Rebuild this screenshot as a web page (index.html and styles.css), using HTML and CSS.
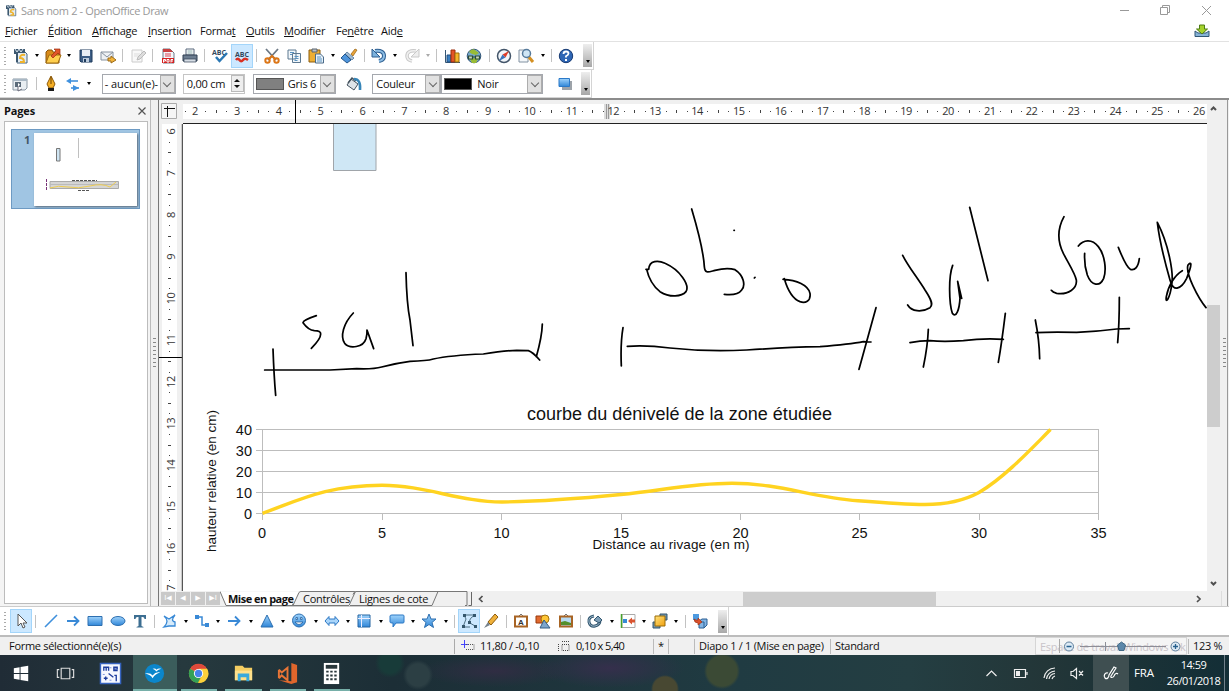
FILE: index.html
```html
<!DOCTYPE html>
<html lang="fr">
<head>
<meta charset="utf-8">
<title>Sans nom 2 - OpenOffice Draw</title>
<link rel="stylesheet" href="styles.css">
</head>
<body>
<svg width="0" height="0" class="defs">
<defs>
<linearGradient id="blue" x1="0" y1="0" x2="0" y2="1"><stop offset="0" stop-color="#9fd3fb"/><stop offset="1" stop-color="#2f86d8"/></linearGradient>
<linearGradient id="gold" x1="0" y1="0" x2="1" y2="1"><stop offset="0" stop-color="#ffe27a"/><stop offset="1" stop-color="#f0a010"/></linearGradient>
<symbol id="doc" viewBox="0 0 20 20"><path d="M7 5h7l3 3v9H7z" fill="#e3edf5" stroke="#49657c"/><path d="M4 3h11v4H8v9H6V8H4z" fill="#3d5870"/><path d="M15 9q-5-1-5 3 4 0 4 4h-4" fill="none" stroke="#efb32c" stroke-width="2"/><path d="M5 3l2 3 2-3 2 3 2-3" fill="none" stroke="#d8e4ee"/></symbol>
</defs>
</svg>

<header class="titlebar">
  <svg class="app-icon" width="15" height="15"><use href="#doc"/></svg>
  <span class="title">Sans nom 2 - OpenOffice Draw</span>
  <svg class="winbtns" width="100" height="20" viewBox="1118 0 100 20" fill="none" stroke="#999"><path d="M1120 9.5h9M1202 5l9 9M1211 5l-9 9M1160.500 6.500h7v7h-7zM1162.500 6v-1.500h7v7h-1.500"/></svg>
</header>

<nav class="menubar">
  <span><u>F</u>ichier</span><span><u>É</u>dition</span><span><u>A</u>ffichage</span><span><u>I</u>nsertion</span><span>Forma<u>t</u></span><span><u>O</u>utils</span><span><u>M</u>odifier</span><span>Fe<u>n</u>être</span><span>Aid<u>e</u></span>
  <svg class="update" width="16" height="14" viewBox="0 0 16 14"><path d="M1 7v5.500h14V7l-3 2H4z" fill="#86b3d6" stroke="#315776"/><path d="M5.500 1h5v4h3L8 10 2.500 5h3z" fill="#a5d22c" stroke="#4e7d13"/></svg>
</nav>

<div class="toolbar standard">
  <i class="grip"></i>
  <b class="cell"><svg><use href="#doc"/></svg></b><i class="arr"></i>
  <b class="cell"><svg viewBox="0 0 20 20"><path d="M3 6l2-2h4l1 2h6v11H3z" fill="#d88a1a" stroke="#8a560a"/><path d="M3 17l3-8h12l-3 8z" fill="#ffcf4e" stroke="#a06c10"/><path d="M8 10l5-5-2-2h6v6l-2-2-5 5z" fill="#e2562a" stroke="#9c2d10" stroke-width=".7"/></svg></b><i class="arr"></i>
  <b class="cell"><svg viewBox="0 0 20 20"><path d="M4 4h12v12H5l-1-1z" fill="#3d5e86" stroke="#1f3b5c"/><path d="M6 4h8v6H6z" fill="#e8eef5"/><path d="M7 12h6v4H7z" fill="#bccbdc"/><path d="M8 13h2v3H8z" fill="#1f3b5c"/></svg></b>
  <b class="cell"><svg viewBox="0 0 20 20"><path d="M3 6h12v8H3z" fill="#eef1f4" stroke="#8793a0"/><path d="M3 6l6 5 6-5" fill="none" stroke="#8793a0"/><path d="M10 12h3v-2l5 4-5 3v-2h-3z" fill="#f3b43b" stroke="#9c6b18"/></svg></b>
  <i class="sep"></i>
  <b class="cell"><svg viewBox="0 0 20 20"><path d="M4 4h10v12H4z" fill="#f8f8f8" stroke="#ccc"/><path d="M6 8h6M6 10h5" stroke="#ddd"/><path d="M9 14l1-3 6-6 2 2-6 6z" fill="#ddd" stroke="#bbb"/></svg></b>
  <i class="sep"></i>
  <b class="cell"><svg viewBox="0 0 20 20"><path d="M5 3h7l4 4v10H5z" fill="#f4f6f9" stroke="#6d7a88"/><path d="M5 3h7l3 3H5z" fill="#c93f3f"/><path d="M7 8h6M7 10h6" stroke="#d45"/><path d="M4 12h12v5H4z" fill="#d42020"/><path d="M5.500 16.500v-3h2v1.500H6M9 13.500v2.500h2v-2.500zM13 16.500v-3h2M13 15h2" fill="none" stroke="#fff"/></svg></b>
  <b class="cell"><svg viewBox="0 0 20 20"><path d="M6 3h8v6H6z" fill="#fff" stroke="#56677a"/><path d="M7.500 5h5M7.500 7h5" stroke="#8aa"/><path d="M3 9h14v6H3z" fill="#6c7d90" stroke="#2f3e50"/><path d="M4 13h12v3H4z" fill="#d6dde5" stroke="#2f3e50" stroke-width=".7"/></svg></b>
  <i class="sep"></i>
  <b class="cell"><svg viewBox="0 0 20 20"><text x="2" y="8.500" class="abc">ABC</text><path d="M6 11l3.500 4L17 7" fill="none" stroke="#2b78b4" stroke-width="2.500"/></svg></b>
  <b class="cell on"><svg viewBox="0 0 20 20"><text x="3" y="10.500" class="abc">ABC</text><path d="M4 14q1.800-2.500 3.500 0t3.500 0 5 0" fill="none" stroke="#d92f22" stroke-width="2.500"/></svg></b>
  <i class="sep"></i>
  <b class="cell"><svg viewBox="0 0 20 20"><path d="M4 3l10 11M16 3L6 14" stroke="#6b7784" stroke-width="1.800"/><circle cx="5.500" cy="14.500" r="2.200" fill="none" stroke="#dc7617" stroke-width="2"/><circle cx="14.500" cy="14.500" r="2.200" fill="none" stroke="#dc7617" stroke-width="2"/><path d="M7 13l3-3 3 3" fill="none" stroke="#dc7617" stroke-width="2"/></svg></b>
  <b class="cell"><svg viewBox="0 0 20 20"><path d="M4 4h8v9H4zM8.500 7.500h8v9h-8z" fill="#f1f6fa" stroke="#5d7890"/><path d="M6 6.500h4M6 8.500h2M10.500 10.500h4M10.500 12.500h4M10.500 14.500h3" stroke="#5b93c0"/></svg></b>
  <b class="cell"><svg viewBox="0 0 20 20"><path d="M3 4h11v12H3z" fill="#edae33" stroke="#8c5c0e"/><path d="M6 3h5v3H6z" fill="#b9c2ca" stroke="#59636d"/><path d="M9.500 8h5l3 3v6h-8z" fill="#e7f1f9" stroke="#4a6a88"/><path d="M11 11h4M11 13h5M11 15h5" stroke="#5b93c0"/></svg></b><i class="arr"></i>
  <b class="cell"><svg viewBox="0 0 20 20"><path d="M12 8l4-5 2 1-4 6z" fill="#e8a33b" stroke="#94600f" stroke-width=".7"/><path d="M8 6l7 6-2 2-7-6z" fill="#a2bdd6" stroke="#40658a" stroke-width=".7"/><path d="M6 8l6 6-4 3-6-5z" fill="#4d94dc" stroke="#23568b"/></svg></b>
  <i class="sep"></i>
  <b class="cell"><svg viewBox="0 0 20 20"><path d="M6 5q9-1 9 5 0 4-5 5" fill="none" stroke="#2c5d8f" stroke-width="4"/><path d="M3 3v8h8z" fill="#7db2dd" stroke="#2c5d8f"/><path d="M6 5q9-1 9 5 0 4-5 5" fill="none" stroke="#8dbde4" stroke-width="2"/></svg></b><i class="arr"></i>
  <b class="cell"><svg viewBox="0 0 20 20"><path d="M14 5Q5 4 5 10q0 4 5 5" fill="none" stroke="#c9c9c9" stroke-width="3.500"/><path d="M17 3v8H9z" fill="#eee" stroke="#c9c9c9"/><path d="M14 5Q5 4 5 10q0 4 5 5" fill="none" stroke="#f0f0f0" stroke-width="1.500"/></svg></b><i class="arr dim"></i>
  <i class="sep"></i>
  <b class="cell"><svg viewBox="0 0 20 20"><path d="M3.500 4v12.500H18" fill="none" stroke="#365673"/><path d="M5 9h4v7H5z" fill="#3b7fc0" stroke="#1f4f80"/><path d="M9 4h4v12H9z" fill="#e35427" stroke="#9b2c0c"/><path d="M13 7h4v9h-4z" fill="#f6b62b" stroke="#9b6d0c"/></svg></b>
  <b class="cell"><svg viewBox="0 0 20 20"><circle cx="10" cy="10" r="6.800" fill="#76a9cf" stroke="#31557a"/><path d="M5 6q3-4 6-2l4 3-3 2-4-1zM6 13l4-1 4 1-2 4H8z" fill="#99bb35"/><path d="M4.500 10h4v3h-4zM11.500 10h4v3h-4zM8 11h4" fill="#cbd8bb" stroke="#2c4b35" stroke-width="1.200"/></svg></b>
  <i class="sep"></i>
  <b class="cell"><svg viewBox="0 0 20 20"><circle cx="10" cy="10" r="6.500" fill="#f2f6fa" stroke="#44566a" stroke-width="1.500"/><path d="M15 5l-3.500 6.500-3-3z" fill="#df3c28"/><path d="M5 15l3.500-6.500 3 3z" fill="#3b73ba"/></svg></b>
  <b class="cell"><svg viewBox="0 0 20 20"><path d="M3 4h9v12H3z" fill="#f4f7fa" stroke="#8292a2"/><path d="M12 10l5 6" stroke="#d49023" stroke-width="3"/><circle cx="10.500" cy="7.500" r="4" fill="#cfe5f4" stroke="#567a9b" stroke-width="1.500"/></svg></b><i class="arr"></i>
  <i class="sep"></i>
  <b class="cell"><svg viewBox="0 0 20 20"><circle cx="10" cy="10" r="6.700" fill="#2f66b5" stroke="#173a72"/><path d="M7.500 8q0-2.500 2.500-2.500t2.500 2q0 1.300-2.500 2.800v1.200" fill="none" stroke="#fff" stroke-width="1.800"/><path d="M9 13h2v2H9z" fill="#fff"/></svg></b>
  <i class="more"></i>
</div>

<div class="toolbar format">
  <i class="grip"></i>
  <b class="cell"><svg viewBox="0 0 20 20"><path d="M3 5h14v9l-2 2H3z" fill="#e9eef2" stroke="#8b98a4"/><path d="M3 5h14v2H3z" fill="#a9b8c5"/><path d="M5 8h6v5H5z" fill="#5a6a79"/><path d="M8 9l2 1.500L8 13z" fill="#fff"/><path d="M8 12v5l4-2" fill="#fff" stroke="#667"/></svg></b>
  <i class="sep s1"></i>
  <b class="cell"><svg viewBox="0 0 20 20"><path d="M10 2l4 8-2 4H8l-2-4z" fill="#f4ae25" stroke="#8c5908"/><path d="M10 3v7" stroke="#6d4305"/><path d="M7 14h6v3H7z" fill="#1b1b1b"/></svg></b>
  <b class="cell"><svg viewBox="0 0 20 20"><path d="M6 7h9M8 14h8" stroke="#3689d8" stroke-width="1.500"/><path d="M8 4v6L3 7z" fill="#3f91df"/><path d="M10 11l6 3-6 3z" fill="#3f91df"/></svg></b><i class="arr a1"></i>
  <div class="combo style"><span>- aucun(e)-</span><i class="drop"></i></div>
  <div class="combo width"><span>0,00 cm</span><i class="spin"></i></div>
  <div class="combo color"><i class="swatch gray"></i><span>Gris 6</span><i class="drop"></i></div>
  <b class="cell bucket"><svg viewBox="0 0 20 20"><path d="M7 5l7 5-4 6-7-5z" fill="#dde3e8" stroke="#44525e"/><path d="M4 9l4-5 4 3" fill="none" stroke="#44525e" stroke-width="1.500"/><path d="M10 5q7 0 6 11" fill="none" stroke="#3685b8" stroke-width="2.600"/></svg></b>
  <div class="combo fill"><span>Couleur</span><i class="drop"></i></div>
  <div class="combo black-box"><i class="swatch black"></i><span>Noir</span><i class="drop"></i></div>
  <b class="cell shadow"><svg viewBox="0 0 20 20"><path d="M7 7h10v9H7z" fill="#9da3a9"/><path d="M4 4.500h10.500v8H4z" fill="url(#blue)" stroke="#2a79c8"/></svg></b>
  <i class="more"></i>
</div>

<main class="workspace">
  <aside class="pages">
    <div class="pages-head"><strong>Pages</strong><svg width="8" height="8" viewBox="0 0 8 8"><path d="M.5.500l7 7M7.500.500l-7 7" stroke="#555" stroke-width="1.200"/></svg></div>
    <div class="pages-list">
      <div class="slide">
        <span>1</span>
        <svg class="thumb" width="103" height="73" viewBox="34 132 103 73"><path d="M56.500 147.500h3.500v12.500h-3.500z" fill="#cfe5f3" stroke="#777"/><path d="M78.500 137v20" stroke="#c0c0c0"/><path d="M50 180.500h68.500v7H50z" fill="#d5d5d5" stroke="#aaa"/><path d="M50 183.500h68" stroke="#bbb"/><path d="M50 187q8-3 18-1t22-1 20 1l6-5" fill="none" stroke="#edcc52"/><path d="M72 179.500h25M78 189.500h12" stroke="#555" stroke-dasharray="3 1"/><path d="M46.500 178v12" stroke="#737" stroke-dasharray="3 1"/></svg>
      </div>
    </div>
  </aside>
  <div class="splitter"><i></i></div>
  <section class="editor">
    <div class="corner"><svg width="16" height="16" viewBox="0 0 16 16"><path d="M.5.500h15v15H.5z" fill="#f5f5f5" stroke="#aaa"/><path d="M3 5.500h11M6.500 3v11" stroke="#111"/></svg></div>
    <svg id="hruler" class="hruler" width="1024" height="24" viewBox="183 100 1024 24"></svg>
    <svg id="vruler" class="vruler" width="24" height="467" viewBox="159 124 24 467"></svg>
    <svg class="canvas" width="1024" height="467" viewBox="183 124 1024 467">
      <path d="M333.500 120h42.500v50.500h-42.500z" fill="#cfe7f5" stroke="#a0a5aa"/>
      <g class="grid"><path d="M256 429.500h843M256 450.500h843M256 471.500h843M256 492.500h843M256 513.500h843"/><path d="M262.500 429v91M382.500 514v6M501.500 514v6M621.500 514v6M740.500 514v6M859.500 514v6M979.500 514v6M1098.500 429v91"/></g>
      <path class="curve" d="M262.500 513.300C300 500 325 485.500 382 485.300 425 485.300 460 502 502 502 545 501.500 580 498.500 621 494.500 660 491 690 483.300 732 483.300 780 483.300 810 497 858 500.800 885 503 905 504.500 925 504.500 950 504.500 967 499 979 492.500 1005 477 1030 450 1050.500 429.500"/>
      <g class="chart">
        <text x="527" y="420" class="ctitle" textLength="305">courbe du dénivelé de la zone étudiée</text>
        <g text-anchor="end"><text x="252" y="435">40</text><text x="252" y="456">30</text><text x="252" y="477">20</text><text x="252" y="498">10</text><text x="252" y="518.500">0</text></g>
        <g text-anchor="middle"><text x="262" y="538">0</text><text x="382" y="538">5</text><text x="501.500" y="538">10</text><text x="621" y="538">15</text><text x="740.500" y="538">20</text><text x="859.500" y="538">25</text><text x="979" y="538">30</text><text x="1098.500" y="538">35</text></g>
        <text x="592.500" y="549" class="axis" textLength="157">Distance au rivage (en m)</text>
        <text transform="translate(216 552) rotate(-90)" class="axis" textLength="142">hauteur relative (en cm)</text>
      </g>
      <g class="ink" transform="translate(150 260) scale(.33333)">
        <path d="M344 330L540 330 620 326Q670 328 695 321 740 309 780 304 830 303 850 297 900 286 1000 282 1060 272 1100 271L1135 272Q1148 276 1169 300M1177 192Q1176 230 1159 290M369 267Q372 350 377 406"/>
        <path d="M499 167Q460 180 459 188 475 210 493 212 513 212 512 222 512 237 484 265M610 159C580 190 570 230 584 250 600 268 640 262 648 236Q652 220 651 210L671 266M768 38Q770 130 780 180L789 257"/>
      </g>
      <g class="ink" transform="translate(600 190) scale(.33333)">
        <path d="M138 238L146 238C148 210 175 210 195 220 240 240 270 285 258 305 245 320 210 324 180 305 155 285 145 260 140 238M275 57Q310 175 313 230C315 252 325 246 345 241 380 232 395 236 405 239 430 255 438 285 425 300 415 314 390 315 373 313M402 121h1M463 264l2-2M549 268C590 270 625 285 630 310 633 335 615 340 600 335 575 325 560 290 553 266"/>
        <path d="M69 413Q61 460 64 528M82 469Q140 465 210 474 320 486 440 480 560 472 660 470 750 463 790 455L813 456M828 353L777 538"/>
      </g>
      <g class="ink" transform="translate(890 190) scale(.33333)">
        <path d="M38 196C55 230 80 260 105 300 125 330 130 345 120 353 95 368 65 365 53 345M188 226C175 260 177 340 187 370 198 385 208 360 210 325L203 274 215 325M239 52L294 272M60 458Q90 452 120 452 160 456 220 452 280 444 340 448M115 418Q113 470 100 531M346 370Q335 460 325 517"/>
        <path d="M522 80C500 120 505 160 520 190 535 220 555 250 559 270 562 295 535 315 500 310Q488 307 484 301M565 168C580 150 605 145 625 170 645 195 650 240 641 265 630 290 605 290 592 255Q582 225 584 190M685 172Q708 230 721 238C735 243 745 230 748 206M436 390Q448 450 449 506M438 428Q480 425 560 427 620 425 680 417L718 416M688 322Q688 400 683 458"/>
        <path d="M802 97C835 160 852 250 845 285 840 325 825 345 829 320 835 285 855 255 877 242M802 97C808 150 820 200 840 270 850 310 875 295 890 265 910 215 902 215 894 225 885 250 925 325 948 353"/>
      </g>
    </svg>
    <div class="vscroll"><i class="vthumb"></i><svg width="13" height="492" viewBox="0 0 13 492" fill="none" stroke="#505050" stroke-width="2"><path d="M4 10l2.500-2.500L9 10M4 482l2.500 2.500L9 482"/></svg></div>
    <div class="bottombar">
      <div class="navbtns"><i>I◀</i><i>◀</i><i>▶</i><i>▶I</i></div>
      <div class="tabs">
        <svg width="252" height="15" viewBox="220 591 252 15"><path d="M220.500 591.500l6 14h66l6-14z" fill="#fff"/><path d="M220 591.500l6 14h67l6-13q1-1 2-1h53q2 0 1 1l-6 13h-56q-1 0 0-2M350 605.500h82l6-14h-82q-2 0-3 3M436 591.500h31v14h-2" fill="none" stroke="#777"/><path d="M471.500 592v13.500h-3" fill="none" stroke="#666"/></svg>
        <b>Mise en page</b><span>Contrôles</span><span>Lignes de cote</span>
      </div>
      <div class="hscroll"><svg width="736" height="15" viewBox="472 591 736 15"><path d="M743 592h193v14H743z" fill="#cdcdcd"/><path d="M482.500 596l-3 3 3 3M1197 596l3 3-3 3" fill="none" stroke="#505050" stroke-width="1.700"/></svg></div>
    </div>
  </section>
  <div class="sidebar-strip"><i></i></div>
</main>

<div class="toolbar draw">
  <i class="grip"></i>
  <b class="cell on"><svg viewBox="0 0 20 20"><path d="M7 3v12l3-3 2 5 2-1-2-4h4z" fill="#fff" stroke="#555"/></svg></b>
  <i class="sep"></i>
  <b class="cell"><svg viewBox="0 0 20 20"><path d="M4 16L16 4" stroke="#3f90dc" stroke-width="1.600"/></svg></b>
  <b class="cell"><svg viewBox="0 0 20 20"><path d="M4 10h12M11 5.500l4.500 4.500-4.500 4.500" fill="none" stroke="#3989d6" stroke-width="1.800"/></svg></b>
  <b class="cell"><svg viewBox="0 0 20 20"><path d="M3 5.500h14v9H3z" fill="url(#blue)" stroke="#2d6fb0"/></svg></b>
  <b class="cell"><svg viewBox="0 0 20 20"><ellipse cx="10" cy="10" rx="7" ry="4.500" fill="url(#blue)" stroke="#2d6fb0"/></svg></b>
  <b class="cell"><svg viewBox="0 0 20 20"><path d="M4 4h12v4h-1.500q0-2-2-2H11.500v9l2 1v.5h-7V16l2-1V6H7.500q-2 0-2 2H4z" fill="#3c6e91"/></svg></b>
  <i class="sep"></i>
  <b class="cell"><svg viewBox="0 0 20 20"><path d="M4 5l5 3 6-4q-5 6 0 7v4h-6l-5 1q6-6 0-11z" fill="#d7ebfa" stroke="#3989d6" stroke-width="1.300"/></svg></b><i class="arr"></i>
  <b class="cell"><svg viewBox="0 0 20 20"><path d="M5 6h5v8h5" fill="none" stroke="#3989d6" stroke-width="1.500"/><path d="M3 4h4v4H3zM13 12h4v4h-4z" fill="#3989d6"/></svg></b><i class="arr"></i>
  <b class="cell"><svg viewBox="0 0 20 20"><path d="M4 10h12M11 5.500l4.500 4.500-4.500 4.500" fill="none" stroke="#3989d6" stroke-width="1.800"/></svg></b><i class="arr"></i>
  <b class="cell"><svg viewBox="0 0 20 20"><path d="M10 4l6 12H4z" fill="url(#blue)" stroke="#2d6fb0"/></svg></b><i class="arr"></i>
  <b class="cell"><svg viewBox="0 0 20 20"><circle cx="10" cy="9.500" r="6.500" fill="url(#blue)" stroke="#2d6fb0"/><path d="M6 11q4 5 8 0zM7 6.500h1.500v2H7zM11.500 6.500H13v2h-1.500z" fill="#fff" stroke="#235f9e" stroke-width=".8"/></svg></b><i class="arr"></i>
  <b class="cell"><svg viewBox="0 0 20 20"><path d="M3 10l4-4.500V8h6V5.500l4 4.500-4 4.500V12H7v2.500z" fill="#a9d5fa" stroke="#2d78c4"/></svg></b><i class="arr"></i>
  <b class="cell"><svg viewBox="0 0 20 20"><path d="M4 4h12v12H4z" fill="url(#blue)" stroke="#2564a2"/><path d="M7.500 4v12M4 7.500h12" stroke="#eef"/></svg></b><i class="arr"></i>
  <b class="cell"><svg viewBox="0 0 20 20"><path d="M5 4h11q1 0 1 1v6q0 1-1 1H9l-3 4v-4H5q-2 0-2-1V5q0-1 2-1z" fill="url(#blue)" stroke="#2d78c4"/></svg></b><i class="arr"></i>
  <b class="cell"><svg viewBox="0 0 20 20"><path d="M10 3l2 5h5l-4 3.500 1.500 5L10 13.500l-4.500 3 1.500-5L3 8h5z" fill="url(#blue)" stroke="#2d6fb0"/></svg></b><i class="arr"></i>
  <i class="sep"></i>
  <b class="cell on"><svg viewBox="0 0 20 20"><path d="M5 4h11Q9 8 11 12l5 3M5 4l2 4-3 8h7" fill="none" stroke="#4e7084"/><path d="M4 3h3v3H4zM14 3h3v3h-3zM3 14h3v3H3zM9 10h3v3H9zM15 14h3v3h-3z" fill="#34566c"/></svg></b>
  <b class="cell"><svg viewBox="0 0 20 20"><path d="M7 11l7-8 3 3-7 8z" fill="#f0b13a" stroke="#8f5c0c"/><path d="M7 11l-4 6 6-3z" fill="#77838c"/></svg></b>
  <i class="sep"></i>
  <b class="cell"><svg viewBox="0 0 20 20"><path d="M8 5l2-2 2 2" fill="none" stroke="#777"/><path d="M4 5.500h12v10H4z" fill="#fff" stroke="#a86424" stroke-width="2"/><text x="7" y="14" class="letter">A</text></svg></b>
  <b class="cell"><svg viewBox="0 0 20 20"><path d="M3 5h8v7H3z" fill="#e16a2f" stroke="#98390d"/><circle cx="12" cy="8" r="4" fill="#ffc636" stroke="#a0720e"/><path d="M11 9l6 8H7z" fill="#7da5cb" stroke="#365c82"/></svg></b>
  <b class="cell"><svg viewBox="0 0 20 20"><path d="M8 5l2-2 2 2" fill="none" stroke="#777"/><path d="M4 5.500h12v10H4z" fill="#b7daf2" stroke="#a86424" stroke-width="2"/><path d="M5 14v-3l4-1 6 2v2z" fill="#548f2c"/></svg></b>
  <i class="sep"></i>
  <b class="cell"><svg viewBox="0 0 20 20"><path d="M9 5Q3 6 4 11t6 4 5-6" fill="none" stroke="#32566f" stroke-width="3"/><path d="M9 5Q3 6 4 11t6 4 5-6" fill="none" stroke="#9db8ca"/><path d="M9 9l4-4 4 4-3 3z" fill="#7c9db5" stroke="#32566f"/></svg></b><i class="arr"></i>
  <b class="cell"><svg viewBox="0 0 20 20"><path d="M4 3.500h13v13H4z" fill="#fff" stroke="#aaa"/><path d="M3.500 3v14" stroke="#46a32a" stroke-width="1.500"/><path d="M5 8h4v4H5z" fill="#3689d6"/><path d="M10 10l4-3.500v2h3v3h-3v2z" fill="#d95431"/></svg></b><i class="arr"></i>
  <b class="cell"><svg viewBox="0 0 20 20"><path d="M10 3h7v6h-7zM3 11h7v6H3z" fill="#6f93ac" stroke="#34566f"/><path d="M5 5h10v10H5z" fill="url(#gold)" stroke="#9b6c09"/></svg></b><i class="arr"></i>
  <i class="sep"></i>
  <b class="cell"><svg viewBox="0 0 20 20"><path d="M3 3h6v6H3z" fill="#4d9ae0"/><path d="M9 10l3-2h5v6l-3 3H9z" fill="#83b4e3" stroke="#2b5f94"/><path d="M9 11h5v6" fill="none" stroke="#2b5f94"/><path d="M4 8q0 4 4 4v2l4-3-4-4v2H6z" fill="#dc512b" stroke="#962b0d" stroke-width=".6"/></svg></b>
  <i class="more"></i>
</div>

<footer class="status">
  <span class="s-info">Forme sélectionné(e)(s)</span>
  <div class="s-pos"><svg width="14" height="12" viewBox="0 0 14 12" fill="none"><path d="M0 4.500h7M3.500 0v8" stroke="#44f"/><path d="M5 4.500h8v5H4" stroke="#555" stroke-dasharray="1 1"/></svg><span>11,80 / -0,10</span></div>
  <div class="s-size"><svg width="14" height="12" viewBox="0 0 14 12" fill="none" stroke="#444" stroke-dasharray="1 1"><path d="M5 4.500h7v6H5zM1.500 4v7M5 1.500h7"/></svg><span>0,10 x 5,40</span></div>
  <span class="s-star">*</span>
  <span class="s-blank"></span>
  <span class="s-slide">Diapo 1 / 1 (Mise en page)</span>
  <span class="s-layout">Standard</span>
  <div class="s-tip"><span>Espace de travail Windows Ink</span>
    <svg width="152" height="18" viewBox="1035 637 152 18"><path d="M1059.500 639v14" stroke="#aaa"/><path d="M1080 646.500h86M1105.500 642v9" stroke="#8d8d96"/><g fill="#dceaf5" stroke="#5f7f9c"><circle cx="1069" cy="646.500" r="4.500"/><circle cx="1175.500" cy="646.500" r="4.500"/></g><path d="M1066.500 646.500h5M1173 646.500h5M1175.500 644v5" stroke="#27618f" stroke-width="1.300"/><path d="M1121.500 642l4 3-1.500 5.500h-5l-1.500-5.500z" fill="#5b87aa" stroke="#426985"/></svg>
  </div>
  <span class="s-zoom">123 %</span>
</footer>

<div class="taskbar">
  <div class="task"><svg viewBox="0 0 24 24" fill="#fff"><path d="M4 6.500l6-1v6H4zM11 5.300l8-1.300v7.500h-8zM4 12.500h6v6l-6-1zM11 12.500h8V20l-8-1.300z"/></svg></div>
  <div class="task"><svg viewBox="0 0 24 24" fill="none" stroke="#ddd" stroke-width="1.200"><path d="M7.500 6.500h9v11h-9zM5.500 8H3.500v8h2M18.500 8h2v8h-2"/></svg></div>
  <div class="task"><svg viewBox="0 0 24 24"><path d="M1.500 1.500h21v21h-21z" fill="#f6f8ff" stroke="#3764c0" stroke-width="1.500"/><path d="M5 9V5.500h5V9M7.500 6v3M19.500 9h-4V5.500h3.500v2h-3M5 17h4M7 15v4M10 12l5 4M16 14h2v6" fill="none" stroke="#1d3d9e" stroke-width="1.400"/><path d="M11 6h2M4 13h2M11 19h2" stroke="#7b94dd"/></svg></div>
  <div class="task open active"><svg viewBox="0 0 24 24"><circle cx="12" cy="12" r="10" fill="#0b86cb"/><path d="M2 12q6-1 8 2 3-4 8-3-5 1-8 6-2-4-8-5zM10 7q3-1 4 1 2-2 5-1-4 1-5 3-1-2-4-3z" fill="#fff"/></svg></div>
  <div class="task open"><svg viewBox="0 0 24 24"><circle cx="12" cy="12" r="10" fill="#e3b52d"/><path d="M12 12L3.300 7A10 10 0 0 1 20.700 7z" fill="#df493b"/><path d="M12 12L3.300 7a10 10 0 0 0 8 15l4-8z" fill="#33a156"/><path d="M12 7h9A10 10 0 0 1 12 22l4-8z" fill="#fbd03b"/><circle cx="12" cy="12" r="4.800" fill="#fff"/><circle cx="12" cy="12" r="3.800" fill="#4683e9"/></svg></div>
  <div class="task open"><svg viewBox="0 0 24 24"><path d="M3 4h8l2 2h8v13H3z" fill="#f4cd62"/><path d="M3 9h18v10H3z" fill="#ffe08a"/><path d="M6 20v-8h12v8h-3v-4H9v4z" fill="#39a9dc"/></svg></div>
  <div class="task open"><svg viewBox="0 0 24 24"><path d="M16 1l6 2v18l-6 2-13-4 13 1z" fill="#e0662c"/><path d="M3 8l3 3 6-5v13l-6-5-3 3M3 8v9" fill="none" stroke="#e87536" stroke-width="2"/></svg></div>
  <div class="task open"><svg viewBox="0 0 24 24"><path d="M4 1h16v22H4z" fill="#fff"/><path d="M6 3h12v4H6z" fill="#29373b"/><path d="M6.500 10h11M6.500 14h11M6.500 18h11" stroke="#29373b" stroke-width="2" stroke-dasharray="2.500 1.700"/></svg></div>
  <svg class="tray" width="110" height="36" viewBox="984 655 110 36" fill="none" stroke="#eee" stroke-width="1.200"><path d="M987.500 676l5-5 5 5M1015.500 669.500h11v8h-11zM1028 672v3"/><path d="M1017 671h4v5h-4z" fill="#eee" stroke="none"/><path d="M1045 678a11 11 0 0 1 11-10M1047.500 679a9 9 0 0 1 8.500-8M1050 679a7 7 0 0 1 6-5.500M1053 679a4 4 0 0 1 3-3"/><path d="M1072 671.500h2l3.500-3v10l-3.500-3h-2zM1080 671l4 4.500M1084 671l-4 4.500"/></svg>
  <div class="pen"><svg width="18" height="18" viewBox="0 0 18 18" fill="none" stroke="#fff" stroke-width="1.200"><path d="M6 9c-3-1-5 3-3 5s4-1 4-3l5-8 2 1-5 8c-1 2 2 2 3 0 1-3 3-3 4-2"/></svg></div>
  <span class="lang">FRA</span>
  <div class="clock"><span>14:59</span><span>26/01/2018</span></div>
  <i class="desktop-edge"></i>
</div>
<script src="rulers.js"></script>
</body>
</html>
```
FILE: styles.css
```css
* { box-sizing: border-box; }
body { margin: 0; width: 1229px; height: 691px; overflow: hidden; display: flex; flex-direction: column; background: #fff; color: #111; font: 11px/14px "Open Sans", "Noto Sans", sans-serif; letter-spacing: -.15px; white-space: nowrap; }
svg { display: block; flex: none; }
i { font-style: normal; }
.defs { position: absolute; }
.titlebar { height: 21px; flex: none; display: flex; align-items: center; padding-left: 3px; color: #999; letter-spacing: -.36px; }
.title { margin-left: 3px; }
.winbtns { margin-left: auto; margin-right: 11px; }
.menubar { height: 21px; flex: none; display: grid; grid-template-columns: 43px 44px 56px 52px 46px 38px 52px 45px 1fr 35px; align-items: center; padding-left: 5px; border-bottom: 1px solid #e2e2e2; letter-spacing: -.25px; }
.menubar u { text-underline-offset: 1px; }
.toolbar { height: 28px; flex: none; display: flex; align-items: center; border: solid #d4d4d4; border-width: 0 1px 1px 0; background: #fff; }
.standard { width: 594px; }
.format { width: 592px; }
.draw { width: 729px; border-bottom: 0; }
.grip { width: 2px; height: 18px; margin: 0 3px 0 4px; background: repeating-linear-gradient(#aaa 0 1px, transparent 1px 3.500px); flex: none; }
.draw .grip { margin-right: 4px; }
.cell { width: 22.400px; height: 24px; flex: none; display: flex; align-items: center; justify-content: center; }
.draw .cell { width: 22.300px; }
.cell svg { width: 20px; height: 20px; }
.cell.on { background: #cce8ff; border: 1px solid #a3d5fa; }
.arr { width: 10.400px; flex: none; display: flex; justify-content: center; }
.draw .arr { width: 10.200px; }
.arr::after { content: ""; border: 2.500px solid transparent; border-top: 3px solid #000; border-bottom: 0; }
.arr.dim::after { border-top-color: #aaa; }
.sep { width: 7.300px; height: 13px; flex: none; background: linear-gradient(#c2c2c2, #c2c2c2) center / 1px 100% no-repeat; }
.more { width: 9px; height: 23px; margin-left: auto; margin-right: 1px; flex: none; background: linear-gradient(#eee, #a8a8a8); display: flex; align-items: flex-end; justify-content: center; padding-bottom: 4px; }
.more::after { content: ""; border: 2.500px solid transparent; border-top: 3px solid #000; border-bottom: 0; }
.abc { font: bold 7px "Open Sans", sans-serif; fill: #33485e; letter-spacing: 0; }
.letter { font: bold 8px "Liberation Sans", sans-serif; fill: #333; letter-spacing: 0; }
.format .s1 { margin: 0 .5px 0 1px; }
.format .cell + .cell { margin-left: -1px; }
.format .a1 { margin-right: 7.500px; }
.combo { height: 20px; border: 1px solid #a5a8ae; display: flex; align-items: center; background: #fff; flex: none; }
.combo span { padding-left: 3px; flex: 1; letter-spacing: -.25px; }
.style { width: 74px; }
.combo.style span { padding-left: 2px; letter-spacing: -.1px; }
.width { width: 62px; margin-left: 7px; border-color: #c5c5c5; }
.color { width: 83px; margin-left: 8px; }
.bucket { margin-left: 7px; }
.fill { width: 69px; margin-left: 7px; }
.black-box { width: 102px; }
.format .shadow { margin-left: 11px; }
.drop { width: 15px; height: 18px; background: #e1e1e1; border: 1px solid #adadad; display: flex; align-items: center; justify-content: center; flex: none; }
.drop::after { content: ""; width: 5px; height: 5px; border: solid #666; border-width: 0 1px 1px 0; transform: translateY(-1px) rotate(45deg); }
.spin { width: 13px; height: 17px; border: 1px solid #bbb; background: #eee; display: flex; flex-direction: column; align-items: center; justify-content: center; gap: 3px; }
.spin::before, .spin::after { content: ""; border: 3px solid transparent; border-top: 0; border-bottom: 3px solid #111; }
.spin::after { border-bottom: 0; border-top: 3px solid #111; }
.swatch { width: 28px; height: 12px; margin-left: 2px; border: 1px solid #555; }
.gray { background: #808080; }
.black { background: #000; }
.combo.black-box span { padding-left: 5px; }
.combo.color span { padding-left: 4px; }
.workspace { height: 509px; flex: none; display: flex; border-top: 2px solid #8c8c8c; border-bottom: 1px solid #ccc; background: #f0f0f0; }
.pages { width: 151px; padding: 0 2px 2px 4px; display: flex; flex-direction: column; border-right: 1px solid #bbb; background: #f4f4f4; }
.pages-head { height: 21px; display: flex; align-items: center; justify-content: space-between; padding-right: 2px; }
.pages-list { flex: 1; background: #fff; border: 1px solid #bcbcbc; padding: 7px 7px 7px 6px; }
.slide { width: 129px; height: 80px; background: #a0c5e3; border: 1px solid #6d9ac3; display: flex; padding: 3px 0 0 12px; font-weight: bold; color: #456; }
.slide span { width: 10px; }
.thumb { background: #fff; box-shadow: 1px 1px 2px #567; }
.splitter { width: 7px; display: flex; align-items: center; justify-content: center; }
.splitter i, .sidebar-strip i { width: 3px; height: 30px; background: repeating-linear-gradient(#888 0 1px, transparent 1px 4px); }
.editor { width: 1063px; display: grid; grid-template-columns: 24px 1024px 15px; grid-template-rows: 24px 467px 15px; border-left: 1px solid #777; }
.corner { padding: 3px 0 0 2px; }
.vscroll { grid-column: 3; grid-row: 1 / 3; display: flex; position: relative; background: #f0f0f0; }
.hruler { grid-column: 2; grid-row: 1; }
.vruler { grid-column: 1; grid-row: 2; }
.canvas { grid-column: 2; grid-row: 2; background: #fff; }
.vthumb { position: absolute; left: 0; top: 205px; width: 13px; height: 122px; background: #cdcdcd; }
.vscroll svg { position: relative; }
.bottombar { grid-column: 1 / 4; display: flex; background: #f0f0f0; }
.navbtns { width: 61px; display: flex; gap: 1px; padding: 1px 0 0 2px; }
.navbtns i { width: 14px; height: 13px; background: #c9c9c9; color: #fff; font: 7px/13px "DejaVu Sans", sans-serif; text-align: center; letter-spacing: 0; }
.tabs { position: relative; width: 252px; display: grid; grid-template-columns: 75px 56px 1fr; padding-left: 8px; line-height: 16px; letter-spacing: -.3px; }
.tabs svg { position: absolute; left: 0; top: 0; }
.tabs b, .tabs span { position: relative; }
.tabs b { letter-spacing: -.5px; }
.hscroll { flex: 1; }
.sidebar-strip { width: 7px; margin-right: 1px; border-left: 1px solid #ddd; border-right: 1px solid #999; display: flex; align-items: center; justify-content: center; }
.ruler-num { font: 11px "Open Sans", sans-serif; fill: #333; letter-spacing: -.5px; text-anchor: middle; }
.grid { fill: none; stroke: #bdbdbd; }
.curve { fill: none; stroke: #ffd320; stroke-width: 3.400; }
.ink { fill: none; stroke: #000; stroke-width: 5.200; stroke-linecap: round; stroke-linejoin: round; }
.chart { font: 14.500px "Liberation Sans", sans-serif; fill: #111; letter-spacing: 0; }
.ctitle { font-size: 18px; }
.axis { font-size: 13.500px; }
.status { height: 20px; flex: none; display: flex; align-items: center; background: #f0f0f0; border-top: 2px solid #bcbcbc; letter-spacing: -.3px; }
.status > * { height: 15px; flex: none; }
.s-info { width: 454px; padding-left: 9px; }
.s-pos, .s-size { display: flex; gap: 5px; align-items: center; }
.s-pos { width: 103px; border-left: 1px solid #aaa; padding-left: 6px; }
.s-size { width: 96px; letter-spacing: -.6px; }
.s-star, .s-blank, .s-slide, .s-layout, .s-zoom { border-left: 1px solid #bbb; padding-left: 4px; }
.s-star { width: 15px; }
.s-blank { width: 26px; }
.s-slide { width: 136px; }
.s-layout { width: 205px; }
.status .s-tip { width: 152px; height: 18px; border: 1px solid #d5d5d5; position: relative; color: #c9c4c9; background: #f5f5f5; padding-left: 4px; line-height: 17px; letter-spacing: -.3px; }
.s-tip svg { position: absolute; left: -1px; top: -1px; }
.s-zoom { margin-left: 1px; }
.taskbar { height: 36px; flex: none; display: flex; color: #fff; background: radial-gradient(circle at 722px 16px, #3b4a35 0 15px, transparent 18px), radial-gradient(circle at 665px 34px, #484832 0 12px, transparent 14px), radial-gradient(ellipse at 995px 16px, #43283d 0 12px, transparent 22px), radial-gradient(circle at 418px 20px, #2c3f44 0 11px, transparent 15px), radial-gradient(circle at 390px 8px, #183b39 0 10px, transparent 15px), radial-gradient(ellipse 75px 20px at 610px 13px, #352f4c, transparent), radial-gradient(ellipse 75px 16px at 495px 16px, #302d43, transparent), linear-gradient(90deg, #202c36, #26393e 15%, #1c2e36 32%, #203b42 60%, #243e42 74%, #233638 85%, #132e36); }
.task { width: 44.300px; display: flex; align-items: center; justify-content: center; position: relative; flex: none; padding-right: 1px; }
.task svg { width: 23px; height: 23px; }
.task.open::after { content: ""; position: absolute; left: 4px; right: 4px; bottom: 0; height: 2px; background: #76afa8; }
.task.active { background: #3b5d5c; }
.task.active::after { left: 0; right: 0; }
.tray { margin-left: auto; }
.pen { width: 36px; background: #3f4f51; display: flex; align-items: center; justify-content: center; }
.lang { width: 34px; font-size: 11.500px; line-height: 36px; padding-left: 5px; letter-spacing: -.2px; }
.clock { width: 61px; display: flex; flex-direction: column; align-items: center; padding-top: 2px; line-height: 16px; letter-spacing: -.5px; }
.desktop-edge { width: 5px; border-left: 1px solid #71808a; }
```
FILE: rulers.js
```javascript
const NS = 'http://www.w3.org/2000/svg';
function add(parent, tag, attrs, text) {
  const el = document.createElementNS(NS, tag);
  for (const k in attrs) el.setAttribute(k, attrs[k]);
  if (text !== undefined) el.textContent = text;
  parent.appendChild(el);
}

// Horizontal ruler, in centimetres
const h = document.getElementById('hruler');
const stepX = 41.83;
add(h, 'rect', { x: 183, y: 104, width: 1024, height: 15, fill: '#fff' });
add(h, 'rect', { x: 604, y: 104, width: 6, height: 15, fill: '#ddd' });
add(h, 'path', { d: 'M606.5 104v15M608.5 104v15', stroke: '#999' });
for (let n = 2; n <= 26; n++) {
  const x = 195 + (n - 2) * stepX;
  add(h, 'text', { x: x, y: 115, class: 'ruler-num' }, n);
  [-0.25, 0.25, 0.5].forEach(q => {
    const half = q === 0.5;
    add(h, 'rect', { x: Math.round(x + q * stepX), y: half ? 110 : 111, width: 1, height: half ? 3 : 1, fill: '#444' });
  });
}
add(h, 'path', { d: 'M295.5 100v23', stroke: '#000' });
add(h, 'rect', { x: 182, y: 123, width: 1025, height: 1, fill: '#222' });

// Vertical ruler
const v = document.getElementById('vruler');
const stepY = 41.75;
add(v, 'rect', { x: 162, y: 124, width: 15, height: 467, fill: '#fff' });
for (let n = 6; n <= 17; n++) {
  const y = 131.5 + (n - 6) * stepY;
  add(v, 'text', { transform: `translate(175 ${y}) rotate(-90)`, class: 'ruler-num' }, n);
  [-0.25, 0.25, 0.5].forEach(q => {
    const half = q === 0.5;
    add(v, 'rect', { x: half ? 168 : 169, y: Math.round(y + q * stepY), width: half ? 3 : 1, height: 1, fill: '#444' });
  });
}
add(v, 'path', { d: 'M159 357.5h23', stroke: '#000' });
add(v, 'path', { d: 'M182.500 124v467', stroke: '#555', 'stroke-width': 1.5 });
```
